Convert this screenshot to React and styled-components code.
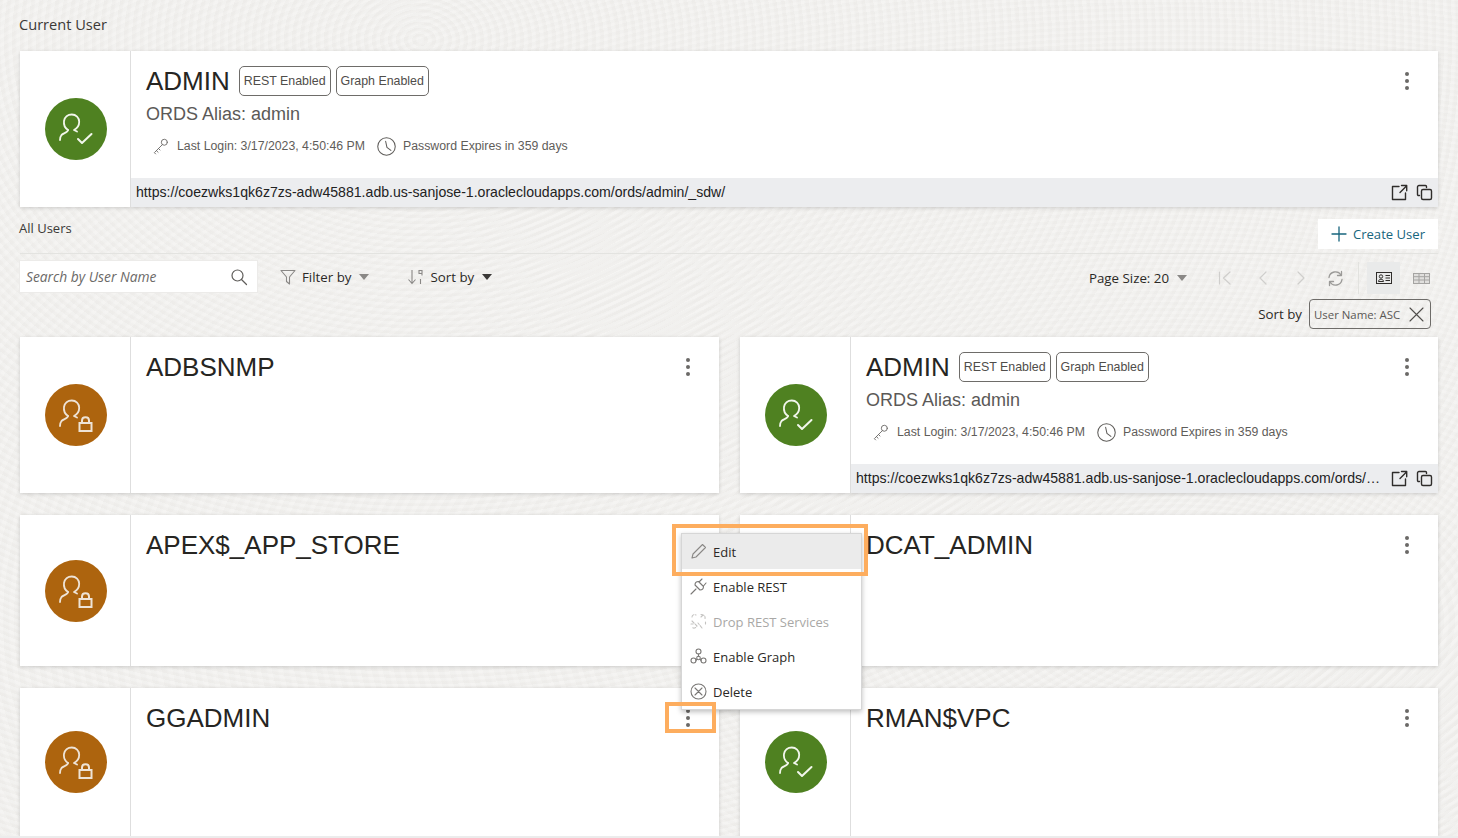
import React from "react";
import styled, { createGlobalStyle } from "styled-components";

const GlobalStyle = createGlobalStyle`
  html, body {
    margin: 0;
    padding: 0;
    height: 838px;
    overflow: hidden;
    background: #ececec;
  }
  * { box-sizing: border-box; }
`;

const Page = styled.div`
  position: relative;
  width: 1458px;
  height: 836px;
  overflow: hidden;
  padding: 0 20px;
  font-family: "Open Sans", "Noto Sans", sans-serif;
  color: #2b2926;
  background-color: #f1f0ee;
  background-image:
    repeating-radial-gradient(ellipse at 420px 40px, rgba(255,255,255,0.16) 0 3px, rgba(228,226,222,0.14) 5px 8px),
    repeating-radial-gradient(ellipse at 1180px 620px, rgba(255,255,255,0.12) 0 4px, rgba(228,226,222,0.12) 6px 11px);
`;

const SectionTitle = styled.div`
  height: 51px;
  padding-top: 14px;
  margin-left: -1px;
  font-size: 14.6px;
  line-height: 20px;
  color: #3b3936;
`;

const Card = styled.div`
  display: flex;
  height: ${(p) => p.$h}px;
  background: #fff;
  box-shadow: 0 1px 4px rgba(0, 0, 0, 0.16);
  min-width: 0;
`;

const AvatarCol = styled.div`
  flex: 0 0 111px;
  display: flex;
  align-items: center;
  justify-content: center;
  border-right: 1px solid #dedede;
  padding-left: 2px;
`;

const Avatar = styled.div`
  width: 62px;
  height: 62px;
  border-radius: 50%;
  background: ${(p) => (p.$locked ? "#ad640e" : "#4f8121")};
  svg { display: block; }
`;

const CardMain = styled.div`
  flex: 1;
  min-width: 0;
  display: flex;
  flex-direction: column;
`;

const CardBody = styled.div`
  flex: 1;
  min-height: 0;
  padding: 14px 23px 0 15px;
  display: flex;
`;

const CardText = styled.div`
  flex: 1;
  min-width: 0;
  font-family: "Liberation Sans", Arial, sans-serif;
`;

const NameRow = styled.div`
  display: flex;
  align-items: center;
  height: 32px;
  gap: 5px;
`;

const UserName = styled.div`
  font-size: 26px;
  line-height: 32px;
  color: #262522;
  margin-right: 4px;
`;

const Tag = styled.div`
  height: 30px;
  padding: 0 4px;
  border: 1px solid #6e6c69;
  border-radius: 5px;
  font-size: 12.4px;
  line-height: 28px;
  color: #4f4d4a;
  white-space: nowrap;
`;

const Alias = styled.div`
  margin-top: 5px;
  font-size: 18px;
  line-height: 24px;
  color: #5b5957;
`;

const MetaRow = styled.div`
  display: flex;
  align-items: center;
  margin-top: 8px;
  height: 24px;
  padding-left: 5px;
  font-size: 12.3px;
  color: #5f5d5a;
  svg { flex: none; }
`;

const MetaText = styled.span`
  margin-left: ${(p) => p.$gap}px;
  margin-right: 11px;
  white-space: nowrap;
`;

const KebabButton = styled.div`
  flex: none;
  width: 16px;
  height: 20px;
  margin-top: 6px;
  display: flex;
  flex-direction: column;
  align-items: center;
  justify-content: center;
  gap: 3px;
  i {
    width: 4px;
    height: 4px;
    border-radius: 50%;
    background: #6b6967;
  }
`;

const UrlBar = styled.div`
  height: 29px;
  flex: none;
  display: flex;
  align-items: center;
  padding: 0 5px 1px 5px;
  background: #ecedef;
  font-family: "Liberation Sans", Arial, sans-serif;
  font-size: 14.1px;
  color: #222;
`;

const UrlText = styled.div`
  flex: 1;
  min-width: 0;
  overflow: hidden;
  white-space: nowrap;
  text-overflow: ellipsis;
  margin-right: 7px;
`;

const UrlIcons = styled.div`
  display: flex;
  align-items: center;
  gap: 8px;
  flex: none;
`;

const AllUsersHead = styled.div`
  display: flex;
  justify-content: space-between;
  height: 47px;
  padding-top: 12px;
  border-bottom: 1px solid #e3e3e0;
`;

const SmallTitle = styled.div`
  margin-left: -1px;
  font-size: 13px;
  line-height: 18px;
  color: #3b3936;
`;

const CreateButton = styled.div`
  width: 120px;
  height: 30px;
  display: flex;
  align-items: center;
  justify-content: center;
  gap: 6px;
  background: #fff;
  font-size: 13.1px;
  color: #17657d;
`;

const Toolbar = styled.div`
  display: flex;
  align-items: flex-start;
  height: 45px;
  padding-top: 7px;
`;

const SearchBox = styled.div`
  width: 237px;
  height: 31px;
  display: flex;
  align-items: center;
  justify-content: space-between;
  padding: 0 9px 0 6px;
  background: #fff;
  box-shadow: 0 0 0 1px #ecebe9;
  font-size: 13.8px;
  font-style: italic;
  color: #6b6967;
`;

const Dropdown = styled.div`
  display: flex;
  align-items: center;
  height: 31px;
  margin-left: ${(p) => p.$ml}px;
  font-size: 13.3px;
  color: #2b2926;
`;

const DropLabel = styled.span`
  margin: 0 ${(p) => p.$mr}px 0 ${(p) => p.$ml}px;
  white-space: nowrap;
`;

const Caret = styled.span`
  width: 0;
  height: 0;
  border-left: 5px solid transparent;
  border-right: 5px solid transparent;
  border-top: 6px solid ${(p) => (p.$dark ? "#3a3836" : "#8a8886")};
`;

const ToolRight = styled.div`
  margin-left: auto;
  margin-top: 1px;
  display: flex;
  align-items: center;
  height: 32px;
  font-size: 13.3px;
`;

const Pager = styled.div`
  display: flex;
  margin-left: 19px;
  margin-right: 7px;
`;

const PagerIcon = styled.div`
  width: 38px;
  display: flex;
  justify-content: center;
`;

const ViewToggle = styled.div`
  width: ${(p) => (p.$active ? 33 : 34)}px;
  height: 32px;
  margin-right: ${(p) => (p.$active ? 4 : 0)}px;
  display: flex;
  align-items: center;
  justify-content: center;
  background: ${(p) => (p.$active ? "#e9eaea" : "transparent")};
`;

const ToolDivider = styled.div`
  width: 1px;
  height: 32px;
  margin: 0 8px 0 14px;
  background: #e2e2df;
`;

const SortRow = styled.div`
  display: flex;
  justify-content: flex-end;
  align-items: center;
  height: 38px;
  padding: 0 7px 8px 0;
  gap: 7px;
  font-size: 13.3px;
`;

const SortChip = styled.div`
  width: 122px;
  height: 30px;
  display: flex;
  align-items: center;
  justify-content: space-between;
  padding: 0 6px 0 4px;
  border: 1px solid #6e6c69;
  border-radius: 4px;
  font-size: 11.4px;
  color: #5a5855;
  white-space: nowrap;
`;

const CardGrid = styled.div`
  display: grid;
  grid-template-columns: 699px 698px;
  grid-template-rows: 156px 151px 148px;
  gap: 22px 21px;
`;

const Menu = styled.div`
  position: absolute;
  left: 681px;
  top: 533px;
  width: 181px;
  height: 177px;
  background: #fff;
  border: 1px solid #d6d6d6;
  box-shadow: 0 2px 5px rgba(0, 0, 0, 0.25);
  font-size: 13px;
  z-index: 2;
`;

const MenuItem = styled.div`
  height: 35px;
  display: flex;
  align-items: center;
  gap: 6px;
  padding-left: 8px;
  color: ${(p) => (p.$disabled ? "#a9a8a6" : "#2b2926")};
  background: ${(p) => (p.$active ? "#ebebeb" : "transparent")};
  svg { flex: none; }
`;

const Highlight = styled.div`
  position: absolute;
  left: ${(p) => p.$x}px;
  top: ${(p) => p.$y}px;
  width: ${(p) => p.$w}px;
  height: ${(p) => p.$h}px;
  border: 4px solid #fdad5e;
  z-index: 3;
  pointer-events: none;
`;

const StrokeIcon = ({ size = 18, box = 24, color = "#6b6967", width = 1.5, children }) => (
  <svg width={size} height={size} viewBox={`0 0 ${box} ${box}`} fill="none" stroke={color} strokeWidth={width} strokeLinecap="round" strokeLinejoin="round">
    {children}
  </svg>
);

const UserIcon = ({ locked }) => (
  <svg width="62" height="62" viewBox="0 0 62 62" fill="none" stroke={locked ? "#eee3d6" : "#f2f6ec"} strokeWidth="1.8" strokeLinecap="round" strokeLinejoin="round">
    <path d="M23 32C20 30 18.500 27 19 23 19.600 19 22.800 16.500 26.800 16.500 31 16.500 34.200 19.500 34.200 23.800 34.200 27.500 32 30.500 29 32L32 33.500" />
    <path d="M23 32C23 34.500 18.500 35 16.500 37 15.500 38.200 15 40 15 42" />
    {locked ? (
      <>
        <rect x="34.500" y="39" width="12" height="8" strokeLinejoin="miter" strokeWidth="2" />
        <path d="M37 39v-2.500c0-4.500 7-4.500 7 0V39" strokeWidth="2" />
      </>
    ) : (
      <path d="M33 41l4 4 9.500-9" strokeWidth="2" />
    )}
  </svg>
);

const KeyIcon = () => (
  <StrokeIcon size={20} color="#6b6967" width={1.1}>
    <circle cx="16" cy="7.5" r="3.6" />
    <path d="M13.5 10.500L4 20l1.500 1.500M6.500 17.500l2 2M9 15l1.800 1.800" />
  </StrokeIcon>
);

const ClockIcon = () => (
  <StrokeIcon size={21} color="#5f5d5a" width={1.2}>
    <circle cx="12" cy="12" r="10" />
    <path d="M11 6l1.500 7 4.500 3.500" />
  </StrokeIcon>
);

const OpenIcon = () => (
  <StrokeIcon size={17} box={17} color="#2f2d2b" width={1.4}>
    <path d="M8 2.500H1.500v13h13V9M9 8.500l6.500-6.500M10.500 1.500h5.200v5.200" />
  </StrokeIcon>
);

const CopyIcon = () => (
  <StrokeIcon size={17} box={17} color="#2f2d2b" width={1.4}>
    <path d="M3.500 11.500H2.500a1 1 0 0 1-1-1V3a1.500 1.500 0 0 1 1.500-1.500h6.500a1 1 0 0 1 1 1v1" />
    <rect x="5.500" y="5.500" width="10" height="10" rx="1.500" />
  </StrokeIcon>
);

const Kebab = () => (
  <KebabButton>
    <i />
    <i />
    <i />
  </KebabButton>
);

const AdminDetails = () => (
  <>
    <NameRow>
      <UserName>ADMIN</UserName>
      <Tag>REST Enabled</Tag>
      <Tag>Graph Enabled</Tag>
    </NameRow>
    <Alias>ORDS Alias: admin</Alias>
    <MetaRow>
      <KeyIcon />
      <MetaText $gap={6}>Last Login: 3/17/2023, 4:50:46 PM</MetaText>
      <ClockIcon />
      <MetaText $gap={6}>Password Expires in 359 days</MetaText>
    </MetaRow>
  </>
);

const UserCard = ({ name, locked, admin, url, h }) => (
  <Card $h={h}>
    <AvatarCol>
      <Avatar $locked={locked}>
        <UserIcon locked={locked} />
      </Avatar>
    </AvatarCol>
    <CardMain>
      <CardBody>
        <CardText>{admin ? <AdminDetails /> : <NameRow><UserName>{name}</UserName></NameRow>}</CardText>
        <Kebab />
      </CardBody>
      {url && (
        <UrlBar>
          <UrlText>{url}</UrlText>
          <UrlIcons>
            <OpenIcon />
            <CopyIcon />
          </UrlIcons>
        </UrlBar>
      )}
    </CardMain>
  </Card>
);

const ADMIN_URL = "https://coezwks1qk6z7zs-adw45881.adb.us-sanjose-1.oraclecloudapps.com/ords/admin/_sdw/";

export default function App() {
  return (
    <Page>
      <GlobalStyle />
      <SectionTitle>Current User</SectionTitle>
      <UserCard admin url={ADMIN_URL} h={156} />

      <AllUsersHead>
        <SmallTitle>All Users</SmallTitle>
        <CreateButton>
          <StrokeIcon size={16} box={16} color="#17657d" width={1.3}>
            <path d="M8 1v14M1 8h14" />
          </StrokeIcon>
          Create User
        </CreateButton>
      </AllUsersHead>

      <Toolbar>
        <SearchBox>
          Search by User Name
          <StrokeIcon size={18} box={18} color="#5f5d5a" width={1.2}>
            <circle cx="7.5" cy="7.5" r="5.5" />
            <path d="M11.500 11.500l5 5" />
          </StrokeIcon>
        </SearchBox>
        <Dropdown $ml={23}>
          <StrokeIcon size={16} box={16} color="#8a8886" width={1.1}>
            <path d="M1 1.500h14L9.500 8v7L6.500 12.500V8z" />
          </StrokeIcon>
          <DropLabel $ml={6} $mr={8}>Filter by</DropLabel>
          <Caret />
        </Dropdown>
        <Dropdown $ml={38}>
          <svg width="18" height="18" viewBox="0 0 18 18" fill="none" stroke="#8a8886" strokeWidth="1.1">
            <path d="M5 2v13M1.500 11.500L5 15.500l3.500-4" />
            <path d="M12 2.500h3v3h-3zM15 2.500v5M13.500 11v5" />
          </svg>
          <DropLabel $ml={5} $mr={8}>Sort by</DropLabel>
          <Caret $dark />
        </Dropdown>
        <ToolRight>
          <DropLabel $ml={0} $mr={8}>Page Size: 20</DropLabel>
          <Caret />
          <Pager>
            <PagerIcon>
              <StrokeIcon size={16} box={16} color="#cfcecc" width={1.2}>
                <path d="M2.500 2v12M13 2L6.500 8 13 14" />
              </StrokeIcon>
            </PagerIcon>
            <PagerIcon>
              <StrokeIcon size={16} box={16} color="#cfcecc" width={1.2}>
                <path d="M11 2L5 8l6 6" />
              </StrokeIcon>
            </PagerIcon>
            <PagerIcon>
              <StrokeIcon size={16} box={16} color="#cfcecc" width={1.2}>
                <path d="M5 2l6 6-6 6" />
              </StrokeIcon>
            </PagerIcon>
          </Pager>
          <StrokeIcon size={17} box={17} color="#9b9a98" width={1.3}>
            <path d="M2 7.500A6.500 6.500 0 0 1 14 5M15 9.500A6.500 6.500 0 0 1 3 12" />
            <path d="M14.500 1.500V5.500H10.500M2.500 15.500V11.500H6.500" />
          </StrokeIcon>
          <ToolDivider />
          <ViewToggle $active>
            <svg width="16" height="12" viewBox="0 0 16 12" fill="none" stroke="#2f2d2b" strokeWidth="1">
              <rect x="0.5" y="0.5" width="15" height="11" />
              <circle cx="5" cy="4.500" r="1.700" />
              <path d="M2.500 9.500c0-3 5-3 5 0zM9.500 3.500h4.500M9.500 6h4.500M9.500 8.500h4.500" />
            </svg>
          </ViewToggle>
          <ViewToggle>
            <svg width="17" height="11" viewBox="0 0 17 11" fill="#e0dfdd" stroke="#a5a4a2" strokeWidth="1">
              <rect x="0.5" y="0.5" width="16" height="10" />
              <path d="M0.500 3.700h16M0.500 7h16M6 .5v10M11.500 .5v10" fill="none" />
            </svg>
          </ViewToggle>
        </ToolRight>
      </Toolbar>

      <SortRow>
        Sort by
        <SortChip>
          User Name: ASC
          <StrokeIcon size={15} box={15} color="#4f4d4a" width={1.1}>
            <path d="M1 1l13 13M14 1L1 14" />
          </StrokeIcon>
        </SortChip>
      </SortRow>

      <CardGrid>
        <UserCard name="ADBSNMP" locked h={156} />
        <UserCard admin url={ADMIN_URL} h={156} />
        <UserCard name="APEX$_APP_STORE" locked h={151} />
        <UserCard name="DCAT_ADMIN" h={151} />
        <UserCard name="GGADMIN" locked h={148} />
        <UserCard name="RMAN$VPC" h={148} />
      </CardGrid>

      <Menu>
        <MenuItem $active>
          <StrokeIcon size={17} box={17} color="#8a8886" width={1.1}>
            <path d="M2 15l1-4L12.500 1.500l3 3L6 14z" />
          </StrokeIcon>
          Edit
        </MenuItem>
        <MenuItem>
          <StrokeIcon size={17} box={17} color="#7a7876" width={1.1}>
            <path d="M1 16l5-5M5 7l5 5c2 0 3.500-1.500 3.500-3.500L8.500 3.500C6.500 3.500 5 5 5 7zM9 4l3-3M13.500 8L16 5" />
          </StrokeIcon>
          Enable REST
        </MenuItem>
        <MenuItem $disabled>
          <StrokeIcon size={17} box={17} color="#c4c3c1" width={1.1}>
            <path d="M2 4c0-2 2-3 4-2M11 1.500c3 0 4.500 2 4 4M15.500 9v2M2 8l5 5c-1 2-4 3-5 1M12 15l-4-5M1 11h2M13 2l-2 2" strokeDasharray="3 1.5" />
          </StrokeIcon>
          Drop REST Services
        </MenuItem>
        <MenuItem>
          <StrokeIcon size={17} box={17} color="#7a7876" width={1.1}>
            <circle cx="8.5" cy="3.500" r="2.500" />
            <circle cx="3.5" cy="12.500" r="2.500" />
            <circle cx="13.5" cy="12.500" r="2.500" />
            <circle cx="8.5" cy="10" r="1.800" />
            <path d="M8.500 6v2.200M6 12.500l1-1.300M11 12.500l-1-1.300" />
          </StrokeIcon>
          Enable Graph
        </MenuItem>
        <MenuItem>
          <StrokeIcon size={17} box={17} color="#7a7876" width={1.1}>
            <circle cx="8.5" cy="8.500" r="7.500" />
            <path d="M5 5l7 7M12 5l-7 7" />
          </StrokeIcon>
          Delete
        </MenuItem>
      </Menu>
      <Highlight $x={672} $y={524} $w={196} $h={52} />
      <Highlight $x={665} $y={702} $w={51} $h={31} />
    </Page>
  );
}
